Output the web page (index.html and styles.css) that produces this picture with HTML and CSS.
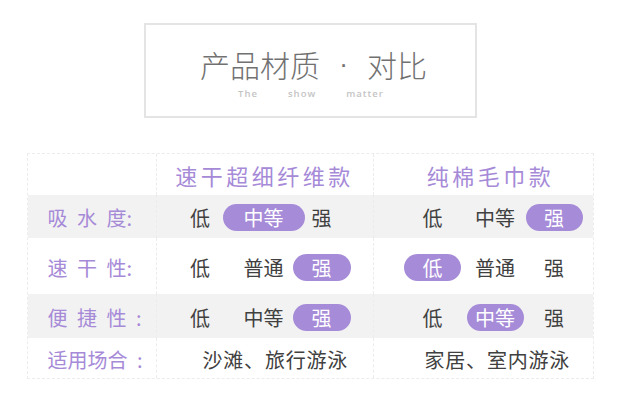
FILE: index.html
```html
<!DOCTYPE html>
<html lang="zh">
<head>
<meta charset="utf-8">
<link rel="stylesheet" href="styles.css">
</head>
<body>
<div class="page">
  <div class="title-box">
    <div class="title"><span>产品材质</span><span class="dot">·</span><span>对比</span></div>
    <div class="subtitle"><span>The</span><span>show</span><span>matter</span></div>
  </div>
  <div class="table">
    <div class="row head">
      <div class="cell"></div>
      <div class="cell hcell">速干超细纤维款</div>
      <div class="cell hcell h3">纯棉毛巾款</div>
    </div>
    <div class="row gray r1">
      <div class="cell label">吸 水 度:</div>
      <div class="cell vals c2"><span class="slot">低</span><span class="slot"><span class="pill wide">中等</span></span><span class="slot">强</span></div>
      <div class="cell vals c3"><span class="slot">低</span><span class="slot">中等</span><span class="slot"><span class="pill">强</span></span></div>
    </div>
    <div class="row r2">
      <div class="cell label">速 干 性:</div>
      <div class="cell vals c2"><span class="slot">低</span><span class="slot">普通</span><span class="slot"><span class="pill p2">强</span></span></div>
      <div class="cell vals c3"><span class="slot"><span class="pill">低</span></span><span class="slot">普通</span><span class="slot">强</span></div>
    </div>
    <div class="row gray r3">
      <div class="cell label">便 捷 性 :</div>
      <div class="cell vals c2"><span class="slot">低</span><span class="slot">中等</span><span class="slot"><span class="pill p2">强</span></span></div>
      <div class="cell vals c3"><span class="slot">低</span><span class="slot"><span class="pill">中等</span></span><span class="slot">强</span></div>
    </div>
    <div class="row r4">
      <div class="cell label">适用场合 :</div>
      <div class="cell text t2">沙滩、旅行游泳</div>
      <div class="cell text t3">家居、室内游泳</div>
    </div>
  </div>
</div>
</body>
</html>
```
FILE: styles.css
```css
* { box-sizing: border-box; }
body {
  margin: 0;
  background: #fff;
  font-family: "Noto Sans CJK SC", "Noto Sans", sans-serif;
}
.page {
  display: flex;
  flex-direction: column;
  align-items: center;
  padding-top: 23px;
}
.title-box {
  width: 333px;
  height: 95px;
  border: 2px solid #e4e4e4;
  display: flex;
  flex-direction: column;
  align-items: center;
  padding-top: 21px;
}
.title {
  display: flex;
  font-size: 30px;
  font-weight: 300;
  line-height: 36px;
  color: #717171;
  padding-left: 7px;
}
.title .dot {
  width: 47px;
  text-align: center;
  font-family: "Liberation Sans", sans-serif;
  font-size: 26px;
}
.subtitle {
  display: flex;
  gap: 30px;
  margin-top: 6px;
  font-family: "Open Sans", "Noto Sans", sans-serif;
  font-size: 9.5px;
  font-weight: 600;
  line-height: 12px;
  letter-spacing: 1px;
  color: #c4c4c4;
  padding-left: 2px;
}
.table {
  margin-top: 35px;
  width: 567px;
  border: 1px dashed #ececec;
  display: flex;
  flex-direction: column;
}
.row {
  display: grid;
  grid-template-columns: 128px 217px 220px;
}
.row.head { height: 41px; }
.row.r1 { height: 43px; }
.row.r2 { height: 56px; }
.row.r3 { height: 44px; }
.row.r4 { height: 40px; }
.row.gray { background: #f2f2f2; }
.cell {
  display: flex;
  align-items: center;
}
.cell + .cell {
  border-left: 1px dashed #ececec;
}
.hcell {
  justify-content: center;
  font-size: 22px;
  letter-spacing: 3.5px;
  color: #a68ad8;
  padding-top: 1px;
}
.hcell.h3 { padding-left: 15px; }
.label {
  padding-left: 20px;
  font-size: 20px;
  word-spacing: 5px;
  color: #a68ad8;
  white-space: pre;
  padding-top: 2px;
}
.vals {
  display: grid;
  align-items: center;
  font-size: 20px;
  color: #404040;
  padding-top: 2px;
}
.vals.c2 {
  grid-template-columns: 63px 64px 52px;
  padding-left: 12px;
}
.vals.c3 {
  grid-template-columns: 62px 63px 55px;
  padding-left: 28px;
}
.slot {
  display: flex;
  justify-content: center;
  align-items: center;
  white-space: nowrap;
}
.pill {
  flex: none;
  display: flex;
  justify-content: center;
  align-items: center;
  width: 57px;
  height: 27px;
  border-radius: 14px;
  background: #a68bd8;
  color: #fff;
}
.pill.wide { width: 82px; }
.pill.p2 { width: 58px; }
.text {
  font-size: 20px;
  letter-spacing: 0.8px;
  color: #404040;
  padding-top: 2px;
}
.text.t2 { padding-left: 46px; }
.text.t3 { padding-left: 51px; }
```
